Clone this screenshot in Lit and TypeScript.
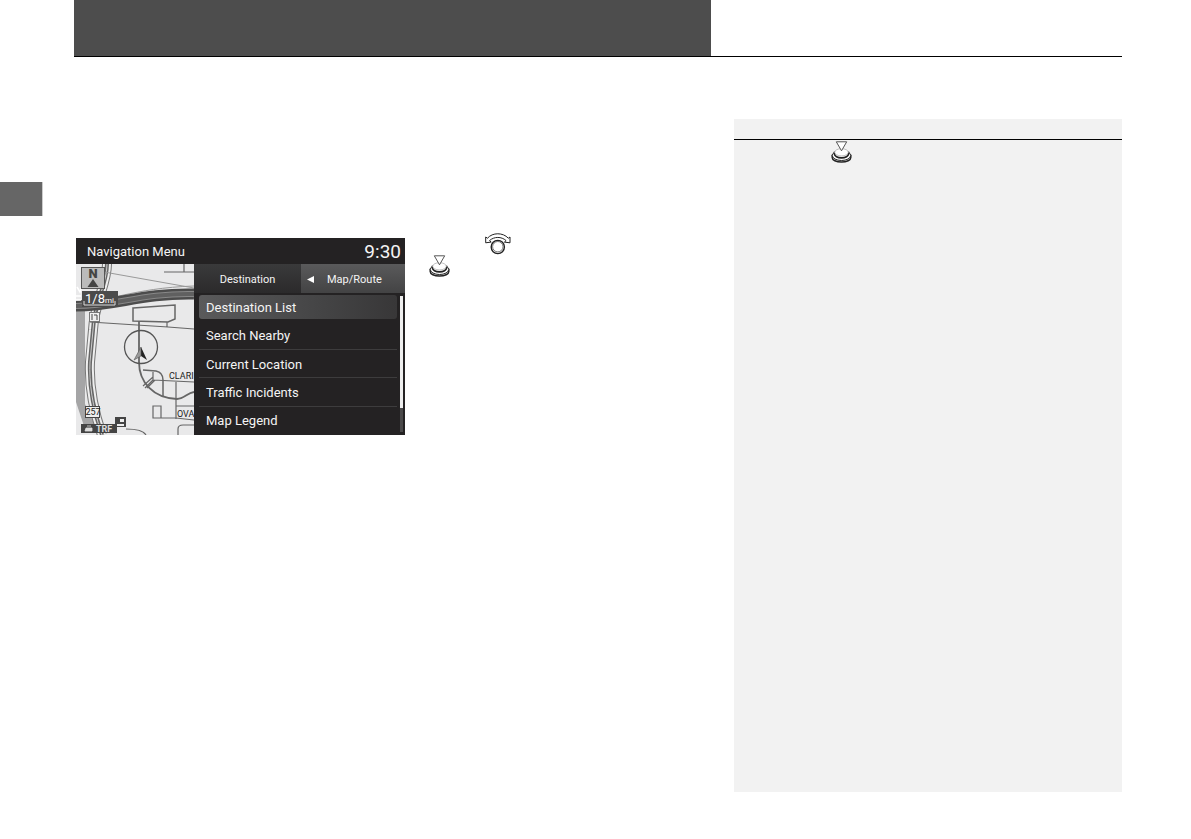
import { LitElement, html, css, svg } from "lit";
import { customElement, property, state } from "lit/decorators.js";

@customElement("press-icon")
class PressIcon extends LitElement {
  static styles = css`
    :host { display: block; width: 22px; height: 22px; }
    svg { display: block; }
  `;
  render() {
    return html`<svg width="22" height="22" viewBox="0 0 22 22" fill="#fff" stroke="#222" role="img" aria-label="Press selector">
      <path d="M1.200 14.500v2c0 2.600 4 4.600 9.300 4.600s9.300-2 9.300-4.600v-2z" stroke-width="1.500" />
      <ellipse cx="10.500" cy="14.500" rx="9.200" ry="5" stroke-width="1" />
      <path d="M3.500 11.500v1.500c0 2 3 3.800 7 3.800s7-1.800 7-3.800v-1.500z" stroke-width="1.700" />
      <ellipse cx="10.500" cy="11.300" rx="6.800" ry="3.600" stroke="#999" stroke-width=".6" />
      <path d="M5.300 .800h10.400l-5.200 9z" stroke="#444" stroke-width=".9" />
    </svg>`;
  }
}

@customElement("rotate-icon")
class RotateIcon extends LitElement {
  static styles = css`
    :host { display: block; width: 26px; height: 22px; }
    svg { display: block; }
  `;
  render() {
    return html`<svg width="26" height="22" viewBox="0 0 26 22" fill="#fff" stroke="#222" role="img" aria-label="Rotate selector">
      <path d="M.7 9.800V4l1.800 1.200C7.500-.7 18-.7 23.300 5.200L25 4v5.800l-5.600-.7 1.700-1.500c-4.600-4.200-12-4.200-16.600 0l1.700 1.500z" stroke-width="1" />
      <circle cx="12.800" cy="14" r="6.600" stroke-width="1.400" />
      <circle cx="12.800" cy="13.700" r="5.200" stroke="#555" stroke-width=".8" />
    </svg>`;
  }
}

@customElement("street-map")
class StreetMap extends LitElement {
  static styles = css`
    :host { display: block; background: #e9e9ea; overflow: hidden; }
    svg { display: block; width: 100%; height: 100%; }
    .label { font-family: Roboto, sans-serif; font-size: 9px; fill: #222; }
    .scale { font-family: Roboto, sans-serif; font-size: 13px; fill: #fff; }
    .unit { font-size: 8px; }
    .north { font-family: Roboto, sans-serif; font-size: 13px; font-weight: 900; fill: #444; }
    .traffic { font-family: Roboto, sans-serif; font-size: 9px; font-weight: 700; fill: #ddd; }
  `;
  private streets() {
    return svg`<g fill="none" stroke="#666" stroke-width="1.200">
      <path d="M88 8h30M108 0v8" />
      <path d="M14 58l78 5 26 2M91 58v5" />
      <path d="M57 44l42-3v14l-7 3-35-1z" stroke-width="1.500" />
      <path d="M63 57v41c0 20 14 36 38 37 7 0 10-6 17-7" stroke-width="1.800" />
      <path d="M67 106l13 1c5 1 7 4 7 9v16" stroke-width="1.500" />
      <path d="M77 108v8l-8 8M77 113l-10 9M79 116l-8 8M77 116l41 2M100 118v37" />
      <path d="M77 142h8v12h-8zM85 154h15l18 2M100 142h18" />
      <path d="M50 165c9 0 17 1 20 6M102 171v-6c0-3 2-4 5-4h11" />
    </g>`;
  }
  render() {
    return html`<svg viewBox="0 0 118 171" preserveAspectRatio="xMinYMin slice" role="img" aria-label="Street map">
      <rect width="118" height="171" fill="#e9e9ea" />
      <path d="M0 46h9v94l13 28H10L0 138z" fill="#a5a5a6" />
      <g fill="none">
        <path d="M31 0C31 20 18 40 17 66L14 98C13 118 16 142 26 171" stroke="#777" stroke-width="10" />
        <path d="M31 0C31 20 18 40 17 66L14 98C13 118 16 142 26 171" stroke="#eee" stroke-width="8" />
        <path d="M31 0C31 20 18 40 17 66L14 98C13 118 16 142 26 171" stroke="#666" stroke-width="4" />
        <path d="M31 0C31 20 18 40 17 66L14 98C13 118 16 142 26 171" stroke="#ccc" stroke-width="1" />
        <path d="M28 8l90 16M0 38C30 39 56 24 118 22" stroke="#999" stroke-width="1" />
        <path d="M0 42C40 42 65 29 118 30" stroke="#4c4c4c" stroke-width="11" />
        <path d="M0 42C40 42 65 29 118 30" stroke="#888" stroke-width="6" />
        <path d="M0 42C40 42 65 29 118 30" stroke="#606060" stroke-width="4" />
        <path d="M1 23l3 5 2-6M0 32h5M0 36h5" stroke="#fff" stroke-width="1.500" />
      </g>
      ${this.streets()}
      <circle cx="65" cy="83" r="16.500" fill="none" stroke="#555" stroke-width="1.300" />
      <path d="M65 83l6 13-6-4z" fill="#222" />
      <path d="M65 83l-7 13 7-4z" fill="#999" stroke="#555" stroke-width=".6" />
      <rect x="5.500" y="3.500" width="23" height="21" fill="#bbb" stroke="#555" />
      <text class="north" x="17" y="14" text-anchor="middle">N</text>
      <path d="M17 15l5.500 8h-11z" fill="#444" />
      <rect x="6" y="27" width="36" height="16" fill="#4b4b4b" />
      <path d="M8 37v4h31v-4" fill="none" stroke="#ddd" />
      <text class="scale" x="9" y="39">1/8<tspan class="unit">mi</tspan></text>
      <rect x="13.500" y="48.500" width="10" height="9" fill="#eee" stroke="#777" />
      <path d="M16 50v6M18 51h3v5" fill="none" stroke="#444" />
      <rect x="9.500" y="142.500" width="14" height="11" fill="#eee" stroke="#444" />
      <text class="label" x="17" y="151" text-anchor="middle">257</text>
      <text class="label" x="93" y="115">CLARI</text>
      <text class="label" x="101" y="153">OVA</text>
      <rect x="5" y="160" width="36" height="9" fill="#444" />
      <path d="M10 164h6v3h-7zM11 162h4" fill="#ddd" stroke="#ddd" stroke-width=".8" />
      <text class="traffic" x="20" y="168">TRF</text>
      <rect x="39" y="153" width="11" height="10" fill="#444" />
      <path d="M41 160h7v2h-7zM44 155h4v3h-4z" fill="#eee" />
    </svg>`;
  }
}

@customElement("nav-screen")
class NavScreen extends LitElement {
  @property({ attribute: false }) items: string[] = [];
  @state() private selected = 0;

  static styles = css`
    :host { display: flex; flex-direction: column; background: #242223; color: #f4f4f4; font-family: Roboto, sans-serif; }
    .title { display: flex; align-items: center; justify-content: space-between; height: 26px; padding: 0 4px 0 11px; }
    .name { margin: 0; font-size: 13px; font-weight: 400; }
    .clock { font-size: 19px; }
    .body { flex: 1; display: grid; grid-template-columns: 118px minmax(0, 1fr); min-height: 0; }
    .menu { display: flex; flex-direction: column; min-height: 0; }
    .tabs { display: grid; grid-template-columns: 107px minmax(0, 1fr); height: 29px; }
    button { font: inherit; color: inherit; border: 0; margin: 0; background: none; }
    .tab { padding: 1px 0 0; font-size: 11px; background: linear-gradient(#3a3a3b, #2b2a2b); }
    .tab.next { display: flex; align-items: center; gap: 13px; padding: 1px 6px 0; background: linear-gradient(#5a5a5b, #434344); }
    .list { flex: 1; display: grid; grid-template-columns: minmax(0, 1fr) 3px; gap: 3px; padding-right: 2px; min-height: 0; }
    .items { display: flex; flex-direction: column; margin: 0; padding: 0 0 0 5px; list-style: none; }
    .item { flex: 1; display: flex; align-items: center; border-bottom: 1px solid #3d3c3d; }
    .item:first-child, .item:last-child { border-color: transparent; }
    .choice { width: 100%; height: 24px; padding: 2px 7px 0; border-radius: 3px; text-align: left; font-size: 13px; line-height: 22px; }
    .choice.on { background: linear-gradient(90deg, #5a5a5b, #454546 60%, #383738); }
    .track { margin: 3px 0; background: #4a494a; }
    .thumb { height: 82%; background: #eee; }
  `;
  render() {
    return html`
      <div class="title"><h1 class="name">Navigation Menu</h1><time class="clock">9:30</time></div>
      <div class="body">
        <street-map></street-map>
        <div class="menu">
          <div class="tabs">
            <button class="tab">Destination</button>
            <button class="tab next">
              <svg width="7" height="7" viewBox="0 0 7 7" aria-hidden="true"><path d="M7 0v7L0 3.500z" fill="#fff" /></svg>
              Map/Route
            </button>
          </div>
          <div class="list">
            <ul class="items">
              ${this.items.map((item, i) => html`<li class="item">
                <button class="choice ${i === this.selected ? "on" : ""}" @click=${() => (this.selected = i)}>${item}</button>
              </li>`)}
            </ul>
            <div class="track"><div class="thumb"></div></div>
          </div>
        </div>
      </div>`;
  }
}

@customElement("app-root")
class AppRoot extends LitElement {
  private items = ["Destination List", "Search Nearby", "Current Location", "Traffic Incidents", "Map Legend"];

  static styles = css`
    :host { display: flex; flex-direction: column; min-height: 100vh; background: #fff; font-family: Roboto, sans-serif; }
    .header { height: 56px; margin: 0 69px 0 74px; padding-right: 411px; border-bottom: 1px solid #000; }
    .banner { height: 100%; background: #4d4d4d; }
    .page { flex: 1; display: grid; grid-template-columns: 76px minmax(0, 1fr) 388px; padding: 62px 69px 47px 0; }
    .tab { width: 42px; height: 34px; margin-top: 63px; background: #666; border-right: 1px solid #ccc; }
    .content { display: flex; align-items: flex-start; gap: 24px; padding-top: 114px; }
    .screen { width: 329px; height: 197px; margin-top: 5px; }
    .steps { display: flex; flex-direction: column; }
    .rotate { padding-left: 56px; }
    .note { background: #f2f2f2; }
    .heading { height: 20px; border-bottom: 1px solid #000; }
    .text { padding: 1px 0 0 97px; }
  `;
  render() {
    return html`
      <header class="header"><div class="banner"></div></header>
      <main class="page">
        <div class="tab"></div>
        <section class="content">
          <nav-screen class="screen" .items=${this.items}></nav-screen>
          <div class="steps">
            <div class="rotate"><rotate-icon></rotate-icon></div>
            <press-icon></press-icon>
          </div>
        </section>
        <aside class="note">
          <div class="heading"></div>
          <div class="text"><press-icon></press-icon></div>
        </aside>
      </main>`;
  }
}
